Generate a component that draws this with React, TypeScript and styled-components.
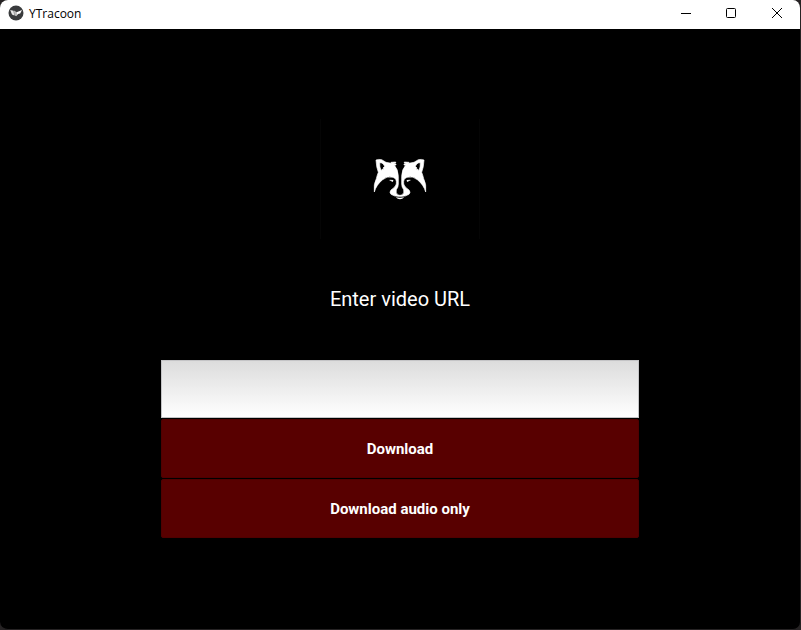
import React from "react";
import styled, { createGlobalStyle } from "styled-components";

const GlobalStyle = createGlobalStyle`
  *, *::before, *::after { box-sizing: border-box; }
  html, body, #root { height: 100%; }
  body { margin: 0; background: #262324; overflow: hidden; }
`;

const Window = styled.div`
  display: flex;
  flex-direction: column;
  height: 100%;
  border: solid #262324;
  border-width: 0 1px 1px 0;
  border-radius: 8px;
  overflow: hidden;
  background: #000;
`;

const TitleBar = styled.header`
  display: flex;
  align-items: center;
  flex: none;
  height: 29px;
  padding-left: 8px;
  padding-bottom: 3px;
  background: #fff;
  color: #000;
`;

const Title = styled.h1`
  flex: 1;
  margin: 0 0 0 5px;
  padding-top: 1px;
  font: 400 12px/16px "Open Sans", "Noto Sans", sans-serif;
`;

const WindowButton = styled.button`
  display: flex;
  align-items: center;
  justify-content: center;
  width: 46px;
  height: 26px;
  padding: 0;
  border: 0;
  background: transparent;
  color: #000;
`;

const Content = styled.main`
  flex: 1;
  display: flex;
  align-items: center;
  justify-content: center;
  font-family: Roboto, sans-serif;
`;

const Form = styled.form`
  display: grid;
  grid-template-rows: 120px 120px 60px 60px 60px;
  width: 60%;
`;

const Logo = styled.div`
  display: flex;
  align-items: center;
  justify-content: center;
  justify-self: center;
  width: 160px;
  border: solid #050505;
  border-width: 0 1px;
`;

const Prompt = styled.label`
  display: flex;
  align-items: center;
  justify-content: center;
  color: #fff;
  font-size: 20px;
  line-height: 24px;
`;

const UrlInput = styled.input`
  width: auto;
  min-width: 0;
  margin: 1px;
  padding: 6px;
  border: 1px solid #c4c4c6;
  border-radius: 0;
  outline: 0;
  background: linear-gradient(#dcdcdc, #fff);
  font: 15px/20px Roboto, sans-serif;
`;

const ActionButton = styled.button`
  margin: 0 1px 1px;
  padding: 1px 0 0;
  border: 1px solid #500000;
  border-radius: 2px;
  background: #580000;
  color: #fff;
  font: 700 15px/20px Roboto, sans-serif;
`;

const AppIcon = () => (
  <svg width="16" height="16" viewBox="0 0 16 16" aria-hidden="true">
    <circle cx="8" cy="8" r="7.5" fill="#393b3d" />
    <path d="M2.2 5 5.6 5.8 6.2 10.4 4 9.4Z" fill="#e8e8e8" />
    <path d="M6 5.6 8.8 7.2 8.2 11.2 6.3 10.2Z" fill="#bdbdbd" />
    <path d="M8.6 7.2 14 5 12.2 8.6 10 9 8.3 11.2Z" fill="#fff" />
  </svg>
);

const HalfFace = () => (
  <>
    <path
      fillRule="evenodd"
      stroke="#fff"
      strokeWidth="2"
      d="M198 150 Q206 147 215 149 L228 157 L244 160 L243 157 L257 156 L257 159 L249 160 L258 162 L258 165 L253 166 Q264 177 265 199 L265 222 Q265 232 259 239 Q256 250 265 255 L270 256 L270 259 Q252 260 243 253 Q237 247 243 240 Q257 231 259 222 Q261 206 249 202 Q231 197 218 209 Q199 224 193 246 Q190 223 199 206 Q201 197 205 187 Q199 172 198 150 Z M209 158 Q208 171 214 183 L216 178 L222 178 L219 174 L224 169 L221 164 L216 159 Z"
    />
    <path d="M239 209 L250 210 L249 215 L245 215 L244 212 L239 212 Z" />
  </>
);

const Raccoon = () => (
  <svg
    width="54"
    height="42"
    viewBox="189 144 162 126"
    fill="#fff"
    role="img"
    aria-label="Raccoon"
  >
    <HalfFace />
    <g transform="translate(540 0) scale(-1 1)">
      <HalfFace />
    </g>
    <path d="M257 262 Q270 264 283 262 Q277 268 270 268 Q263 268 257 262 Z" />
  </svg>
);

export default function App() {
  return (
    <>
      <GlobalStyle />
      <Window>
        <TitleBar>
          <AppIcon />
          <Title>YTracoon</Title>
          <WindowButton type="button" aria-label="Minimize">
            <svg width="12" height="12" fill="none" stroke="currentColor">
              <path d="M2 6.5H12" />
            </svg>
          </WindowButton>
          <WindowButton type="button" aria-label="Maximize">
            <svg width="12" height="12" fill="none" stroke="currentColor">
              <rect x="1.5" y="1.5" width="9" height="9" rx="1" />
            </svg>
          </WindowButton>
          <WindowButton type="button" aria-label="Close">
            <svg width="12" height="12" fill="none" stroke="currentColor">
              <path d="M1 1 11 11M11 1 1 11" />
            </svg>
          </WindowButton>
        </TitleBar>
        <Content>
          <Form onSubmit={(event: React.FormEvent) => event.preventDefault()}>
            <Logo>
              <Raccoon />
            </Logo>
            <Prompt htmlFor="video-url">Enter video URL</Prompt>
            <UrlInput id="video-url" type="text" />
            <ActionButton type="submit">Download</ActionButton>
            <ActionButton type="button">Download audio only</ActionButton>
          </Form>
        </Content>
      </Window>
    </>
  );
}
